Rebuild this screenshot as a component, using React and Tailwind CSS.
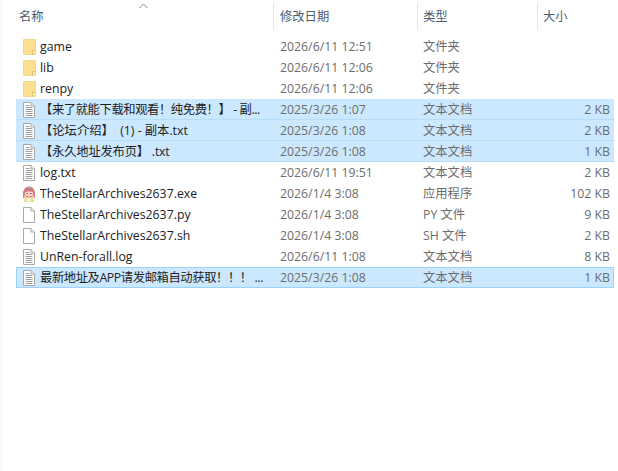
import React from 'react';

const FONT = '[font-family:"Open_Sans","Noto_Sans_CJK_SC",sans-serif]';

const FILES = [
  { name: 'game', date: '2026/6/11 12:51', type: '文件夹', size: '', icon: 'folder' },
  { name: 'lib', date: '2026/6/11 12:06', type: '文件夹', size: '', icon: 'folder' },
  { name: 'renpy', date: '2026/6/11 12:06', type: '文件夹', size: '', icon: 'folder' },
  { name: '【来了就能下载和观看！纯免费！】 - 副...', date: '2025/3/26 1:07', type: '文本文档', size: '2 KB', icon: 'text', selected: true, tight: 'tracking-[-0.4px]' },
  { name: '【论坛介绍】  (1) - 副本.txt', date: '2025/3/26 1:08', type: '文本文档', size: '2 KB', icon: 'text', selected: true },
  { name: '【永久地址发布页】 .txt', date: '2025/3/26 1:08', type: '文本文档', size: '1 KB', icon: 'text', selected: true, tight: 'tracking-[-0.2px]' },
  { name: 'log.txt', date: '2026/6/11 19:51', type: '文本文档', size: '2 KB', icon: 'text' },
  { name: 'TheStellarArchives2637.exe', date: '2026/1/4 3:08', type: '应用程序', size: '102 KB', icon: 'app' },
  { name: 'TheStellarArchives2637.py', date: '2026/1/4 3:08', type: 'PY 文件', size: '9 KB', icon: 'blank' },
  { name: 'TheStellarArchives2637.sh', date: '2026/1/4 3:08', type: 'SH 文件', size: '2 KB', icon: 'blank' },
  { name: 'UnRen-forall.log', date: '2026/6/11 1:08', type: '文本文档', size: '8 KB', icon: 'text' },
  { name: '最新地址及APP请发邮箱自动获取！！！ ...', date: '2025/3/26 1:08', type: '文本文档', size: '1 KB', icon: 'text', focused: true, tight: 'tracking-[-0.4px]' },
];

function FileIcon({ kind }) {
  if (kind === 'folder') {
    return (
      <svg width="13" height="16" viewBox="0 0 13 16" className="block">
        <path d="M.5.5h12v15H.5z" fill="#fde08f" stroke="#f0d88f" />
        <path d="M9.500 15.500v-4h3" fill="#fff0c0" stroke="#dcc070" />
      </svg>
    );
  }
  if (kind === 'app') {
    return (
      <svg width="14" height="16" viewBox="0 0 14 16" className="block">
        <path d="M3 11h8l1 5H2z" fill="#e8dc8c" />
        <path d="M5 11h4v5H5z" fill="#f5f0d0" />
        <circle cx="7" cy="6" r="5.500" fill="#cf7a80" />
        <path d="M3 6.500c1-1.500 7-1.500 8 0v2c-1 2.500-7 2.500-8 0z" fill="#f6d8c8" />
        <path d="M3 2.500C5 0 9 0 11 2.500 9 1.800 5 1.800 3 2.500z" fill="#a9a0a0" />
        <path d="M4.500 7.500h1.500M8 7.500h1.500" stroke="#8a4a4a" />
        <path d="M1 5h1.500v7H1zM11.500 5H13v7h-1.500z" fill="#d4808a" />
      </svg>
    );
  }
  return (
    <svg width="12" height="16" viewBox="0 0 12 16" className="block">
      <path d="M.5.500h7.500l3.500 3.500v11.500H.5z" fill="#fff" stroke="#a8a8a8" />
      <path d="M8 .5v3.500h3.500" fill="#f2f2f2" stroke="#a8a8a8" />
      {kind === 'text' && (
        <path d="M2.500 3.500h4M2.500 5.500h7M2.500 7.500h7M2.500 9.500h7M2.500 11.500h7M2.500 13.500h7" stroke="#a0a0a0" />
      )}
    </svg>
  );
}

function Row({ file }) {
  return (
    <div
      className={
        'grid grid-cols-[256px_144px_120px_78px] h-[21px] items-center text-[12.3px] leading-[21px] ' +
        (file.focused
          ? 'bg-[#cce8ff] outline outline-[#99d1ff] -outline-offset-1 '
          : file.selected
            ? 'bg-[#cce8ff] border-b border-[#b5dcfb] '
            : '')
      }
    >
      <div className="flex items-center min-w-0 pl-[6px]">
        <span className="w-[14px] h-4 shrink-0 flex items-center justify-center">
          <FileIcon kind={file.icon} />
        </span>
        <span className={'ml-[4px] whitespace-pre text-[#222222] ' + (file.tight || '')}>{file.name}</span>
      </div>
      <div className="pl-[8px] whitespace-nowrap text-[#6d6d6d]">{file.date}</div>
      <div className="pl-[7px] whitespace-nowrap text-[#6d6d6d]">{file.type}</div>
      <div className="pr-[4px] text-right whitespace-nowrap text-[#6d6d6d]">{file.size}</div>
    </div>
  );
}

export default function App() {
  return (
    <div className={'w-[618px] h-[471px] bg-white overflow-hidden relative ' + FONT}>
      <div className="absolute left-0 top-0 bottom-0 w-[2px] bg-[#f7f7f7]" />
      <header className="flex h-[30px] pt-[3px] text-[12.3px] leading-[28px] text-[#4d5c6e]">
        <div className="w-[273px] pl-[19px] relative">
          名称
          <svg width="9" height="6" viewBox="0 0 9 6" className="absolute left-[139px] top-0">
            <path d="M.5 5l4-4 4 4" fill="none" stroke="#8a8a8a" />
          </svg>
        </div>
        <div className="w-[144px] pl-[6px] border-l border-[#e5e5e5]">修改日期</div>
        <div className="w-[120px] pl-[5px] border-l border-[#e5e5e5]">类型</div>
        <div className="flex-1 pl-[5px] border-l border-[#e5e5e5]">大小</div>
      </header>
      <div className="pl-[16px] pr-[4px] pt-[6px]">
        {FILES.map((file) => (
          <Row key={file.name} file={file} />
        ))}
      </div>
    </div>
  );
}
